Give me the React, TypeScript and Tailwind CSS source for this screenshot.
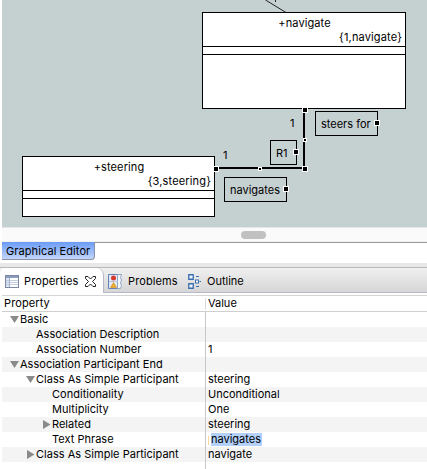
import React from "react";

function Handle({ x, y, small }: { x: number; y: number; small?: boolean }) {
  const s = small ? 4 : 6;
  return (
    <g>
      <rect x={x} y={y} width={s} height={s} fill="#fff" />
      <rect x={x + 1} y={y + 1} width={s - 2} height={s - 2} fill="#000" />
    </g>
  );
}

function ClassNode({ className, name, id }: { className: string; name: string; id: string }) {
  return (
    <div className={`absolute flex flex-col border border-black bg-white ${className}`}>
      <div className="h-[34px] shrink-0 border-b border-black pt-[4px] pr-[3px] leading-[13px]">
        <div className="pl-[4px] text-center tracking-[0.1px]">{name}</div>
        <div className="pt-px text-right tracking-[0.15px]">{id}</div>
      </div>
      <div className="h-2 shrink-0 border-b border-black" />
    </div>
  );
}

function Label({ className, children }: { className: string; children: string }) {
  return (
    <div className={`absolute h-[25px] border border-black pl-[5px] pt-[5px] leading-[15px] ${className}`}>
      {children}
    </div>
  );
}

function Diagram() {
  return (
    <div className="relative ml-[2px] h-[227px] overflow-hidden bg-[#c5d0d1]">
      <div className="absolute -left-[2px] top-0 h-[227px] w-[427px]">
        <ClassNode className="left-[202px] top-[12px] h-[97px] w-[204px]" name="+navigate" id="{1,navigate}" />
        <ClassNode className="left-[22px] top-[156px] h-[61px] w-[193px]" name="+steering" id="{3,steering}" />
        <Label className="left-[315px] top-[111px] w-[63px]">steers for</Label>
        <Label className="left-[270px] top-[140px] w-[27px]">R1</Label>
        <Label className="left-[224px] top-[177px] w-[63px]">navigates</Label>
        <div className="absolute left-[290px] top-[116px] leading-[15px]">1</div>
        <div className="absolute left-[223px] top-[148px] leading-[15px]">1</div>
        <svg className="absolute left-0 top-0" width="427" height="227">
          <path d="M265.5 0L286 12.5" stroke="#222" strokeWidth="1" />
          <path d="M275.5 0V2" stroke="#222" strokeWidth="1" />
          <path d="M218 168H304V110" fill="none" stroke="#000" strokeWidth="2" />
          <Handle x={302} y={107} />
          <Handle x={213} y={166} />
          <Handle x={302} y={166} />
          <Handle x={258} y={167} small />
          <Handle x={303} y={138} small />
          <Handle x={374} y={120} />
          <Handle x={293} y={149} />
          <Handle x={283} y={186} />
        </svg>
      </div>
    </div>
  );
}

function TableIcon() {
  return (
    <svg width="14" height="13" viewBox="0 0 14 13" shapeRendering="crispEdges">
      <rect width="14" height="13" fill="#7c88a3" />
      <rect x="1" y="1" width="12" height="2" fill="#8c9cc0" />
      <rect x="1" y="3" width="4" height="9" fill="#dce5f4" />
      <rect x="5" y="3" width="8" height="9" fill="#fff" />
      <path d="M1 5.5H13M1 7.5H13M1 9.5H13" stroke="#c4cede" />
      <path d="M4.5 3V12" stroke="#a3b0ca" />
    </svg>
  );
}

function CloseIcon() {
  return (
    <svg width="11" height="11" viewBox="0 0 11 11">
      <path d="M.5.5H3L5.5 3 8 .5H10.5V2.5L7.5 5.5 10.5 8.5V10.5H8L5.5 8 3 10.5H.5V8.5L3.5 5.5.5 2.5Z" fill="#fff" stroke="#222" />
    </svg>
  );
}

function ProblemsIcon() {
  return (
    <svg width="15" height="15" viewBox="0 0 15 15">
      <path d="M.5.5H9.5V14.5H.5Z" fill="#e2eaf6" stroke="#6480b5" />
      <path d="M9.5.5H13.5L12.5 3.5 13.5 6 12.5 9 13.5 11.5 12.5 14.5H9.5Z" fill="#f3f6fb" stroke="#93a5c5" />
      <path d="M1 7.5H10" stroke="#b6c5dd" />
      <circle cx="5.5" cy="4" r="2.5" fill="#d43a30" />
      <path d="M5.5 8.5L8.5 13.5H2.5Z" fill="#e9ac27" stroke="#d9952d" strokeWidth=".7" />
    </svg>
  );
}

function OutlineIcon() {
  return (
    <svg width="14" height="15" viewBox="0 0 14 15">
      <path d="M.75.75H5.25V5.25H.75ZM.75 9.75H5.25V14.25H.75Z" fill="#eaf2fc" stroke="#3c6fae" strokeWidth="1.3" />
      <path d="M8 2.5H11M8 12.5H11M11.5 7.5H13" stroke="#3c6fae" />
      <rect x="7.5" y="6" width="3" height="3" fill="#fff" stroke="#3c6fae" />
    </svg>
  );
}

function Tabs() {
  return (
    <div className="relative flex h-[26px] border-t border-[#b9b9b9] bg-gradient-to-b from-[#f0f0f0] to-[#d5d5d5]">
      <div className="absolute inset-x-0 bottom-0 h-px bg-[#b5b9ca]" />
      <div className="relative flex w-[104px] items-center rounded-tl-[5px] rounded-tr-[7px] border-r border-[#b5b9ca] bg-white pl-[5px] pt-[2px]">
        <TableIcon />
        <span className="ml-[5px] w-[61px] tracking-[0.1px]">Properties</span>
        <CloseIcon />
      </div>
      <div className="flex items-center pl-[4px] pt-[1px]">
        <ProblemsIcon />
        <span className="ml-[5px] w-[60px] tracking-[0.1px]">Problems</span>
        <OutlineIcon />
        <span className="ml-[5px]">Outline</span>
      </div>
    </div>
  );
}

type Row = { pad: string; arrow?: "open" | "closed"; name: string; value?: string; editing?: boolean };

const rows: Row[] = [
  { pad: "pl-[8px]", arrow: "open", name: "Basic" },
  { pad: "pl-[24px]", name: "Association Description" },
  { pad: "pl-[24px]", name: "Association Number", value: "1" },
  { pad: "pl-[8px]", arrow: "open", name: "Association Participant End" },
  { pad: "pl-[24px]", arrow: "open", name: "Class As Simple Participant", value: "steering" },
  { pad: "pl-[40px]", name: "Conditionality", value: "Unconditional" },
  { pad: "pl-[40px]", name: "Multiplicity", value: "One" },
  { pad: "pl-[40px]", arrow: "closed", name: "Related", value: "steering" },
  { pad: "pl-[40px]", name: "Text Phrase", value: "navigates", editing: true },
  { pad: "pl-[24px]", arrow: "closed", name: "Class As Simple Participant", value: "navigate" },
];

function Arrow({ kind }: { kind?: "open" | "closed" }) {
  return (
    <svg width="12" height="15" className="mr-[-2px] shrink-0" fill="#8a8a8a">
      {kind === "open" && <path d="M0 4H9L4.5 11Z" />}
      {kind === "closed" && <path d="M1 3L8.5 7.5 1 12Z" />}
    </svg>
  );
}

function PropertyTable() {
  return (
    <div className="ml-[2px] mt-[2px] flex grow flex-col border-t border-[#d4d4d4] leading-[15px]">
      <div className="flex h-[16px] border-b border-[#cfcfcf]">
        <div className="w-[203px] pl-[2px] tracking-[0.1px]">Property</div>
        <div className="mt-[2px] h-[12px] w-px bg-[#dadada]" />
        <div className="pl-[2px]">Value</div>
      </div>
      <div className="relative grow">
        <div className="absolute left-[203px] top-0 h-full w-px bg-[#c8c8c8]" />
        {rows.map((r, i) => (
          <div key={i} className={`flex h-[15px] ${i % 2 ? "bg-[#f4f4f4]" : "bg-white"}`}>
            <div className={`flex w-[204px] shrink-0 whitespace-nowrap ${r.pad}`}>
              <Arrow kind={r.arrow} />
              <span className="tracking-[0.02px]">{r.name}</span>
            </div>
            {r.editing ? (
              <div className="flex pl-[2px]">
                <div className="mt-[4px] h-[9px] w-px bg-[#f5d9a0]" />
                <div className="ml-[2px] mt-px h-[13px] w-[51px] bg-[#b3d1fb] leading-[13px]">{r.value}</div>
              </div>
            ) : (
              <div className="pl-[2px]">{r.value}</div>
            )}
          </div>
        ))}
      </div>
    </div>
  );
}

export default function App() {
  return (
    <div className="flex h-[469px] w-[427px] flex-col overflow-hidden bg-white font-['Inter','Liberation_Sans',sans-serif] text-[11px] text-black">
      <Diagram />
      <div className="ml-[2px] h-[15px] border-b border-t border-b-[#f0f0f0] border-t-[#e7e7e7] bg-[#fafafa] pl-[239px] pt-[3px]">
        <div className="h-[8px] w-[25px] rounded-full bg-[#c1c1c1]" />
      </div>
      <div className="ml-[2px] h-[21px] border-t border-[#999]">
        <div className="-mt-px h-[18px] w-[93px] rounded-br-[4px] border-b border-r border-[#8791a8] bg-gradient-to-b from-[#6a9bf5] to-[#c3d6fa] pl-[4px] leading-[19px] tracking-[0.08px]">
          Graphical Editor
        </div>
      </div>
      <div className="h-[4px] bg-[#e8e8e8]" />
      <Tabs />
      <PropertyTable />
    </div>
  );
}
